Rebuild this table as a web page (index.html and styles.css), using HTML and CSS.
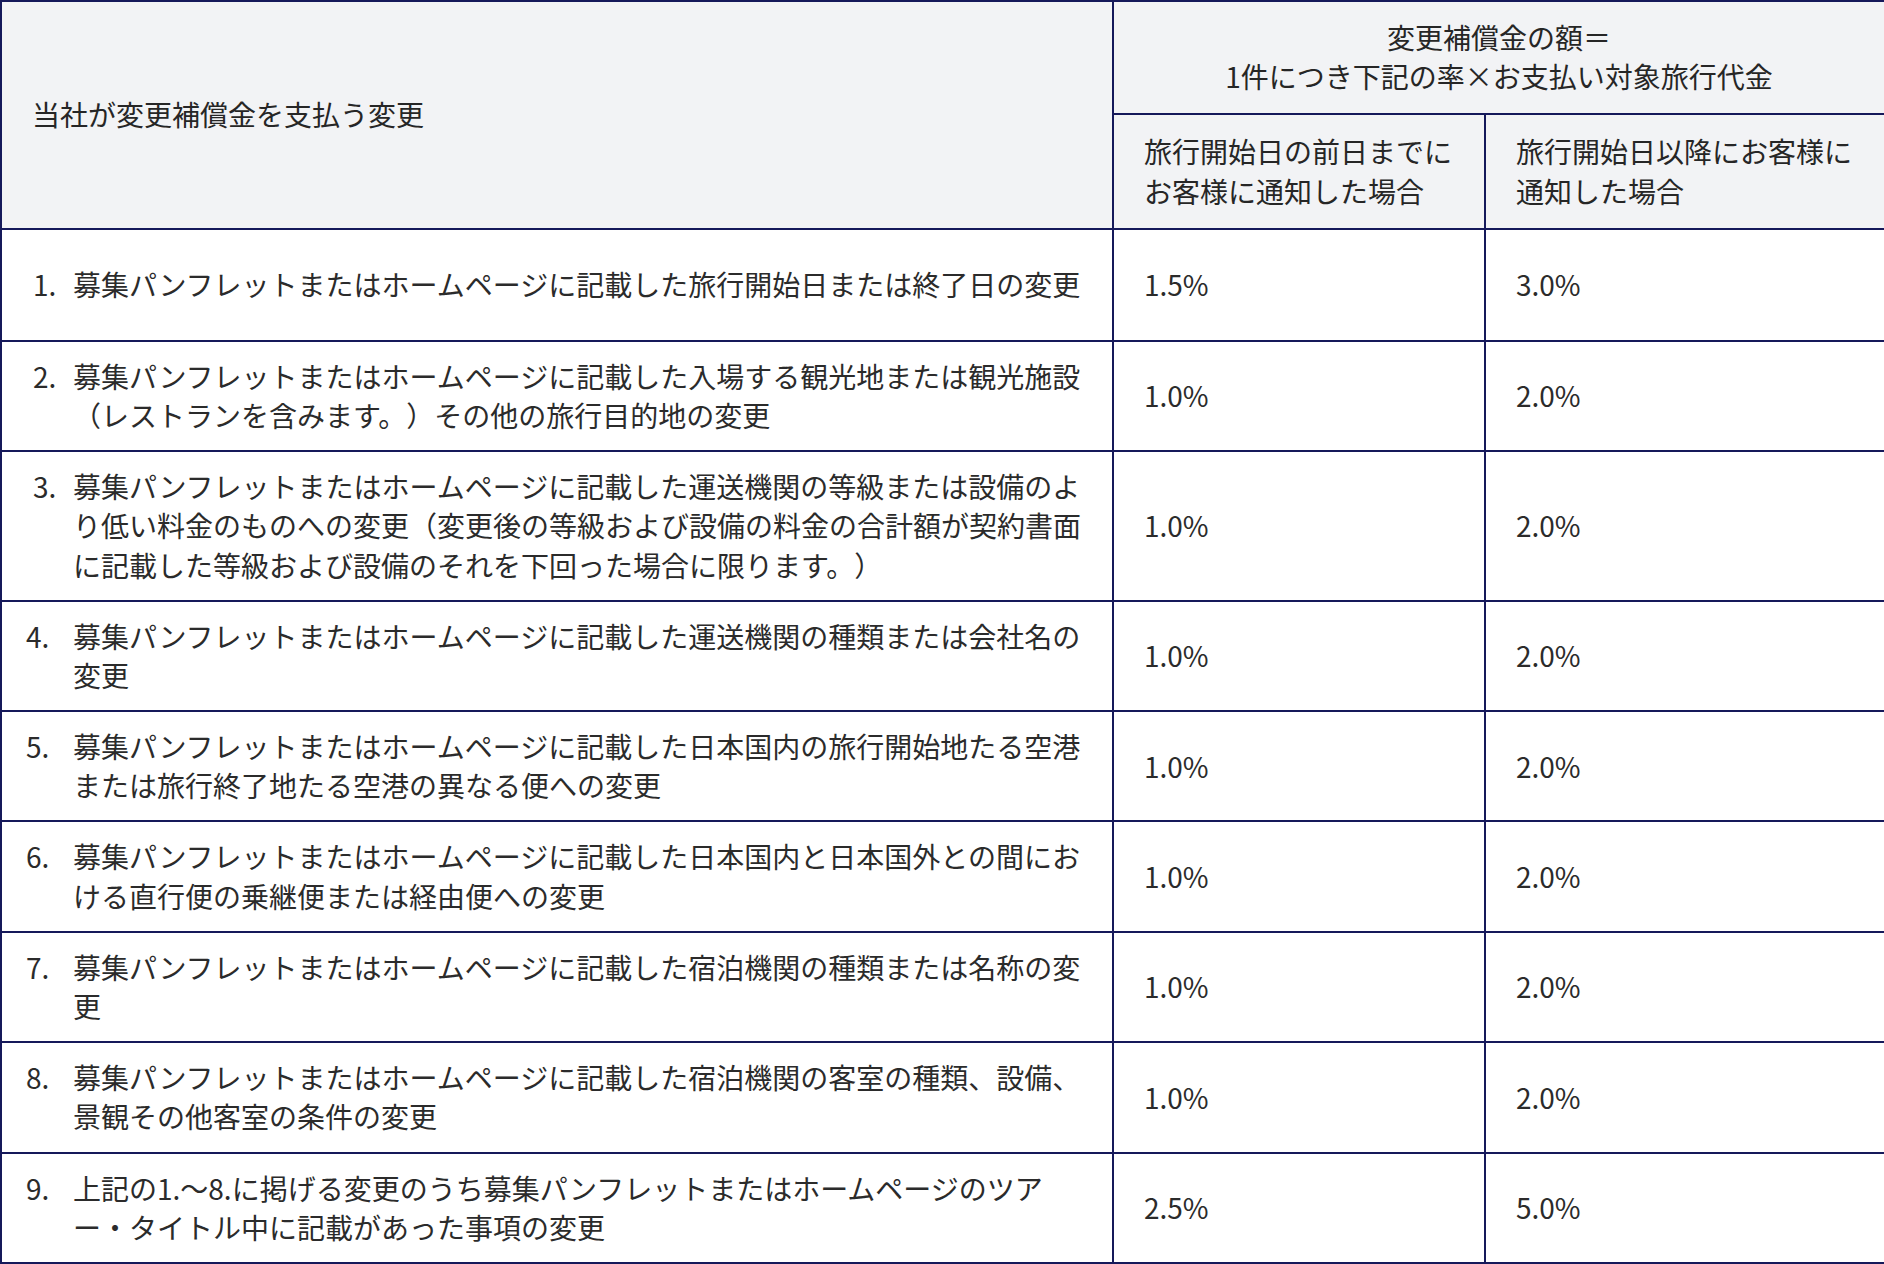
FILE: index.html
```html
<!DOCTYPE html>
<html lang="ja">
<head>
<meta charset="utf-8">
<title>変更補償金</title>
<link rel="stylesheet" href="styles.css">
</head>
<body>
<table class="comp">
  <colgroup>
    <col class="col-change">
    <col class="col-before">
    <col class="col-after">
  </colgroup>
  <thead>
    <tr>
      <th rowspan="2" class="h-main">当社が変更補償金を支払う変更</th>
      <th colspan="2" class="h-amount">変更補償金の額＝<br>1件につき下記の率×お支払い対象旅行代金</th>
    </tr>
    <tr>
      <th class="h-sub">旅行開始日の前日までに<br>お客様に通知した場合</th>
      <th class="h-sub">旅行開始日以降にお客様に<br>通知した場合</th>
    </tr>
  </thead>
  <tbody>
    <tr class="row-first">
      <td class="item"><div class="item-row"><span class="num num-a">1.</span><span class="txt">募集パンフレットまたはホームページに記載した旅行開始日または終了日の変更</span></div></td>
      <td class="rate">1.5%</td>
      <td class="rate">3.0%</td>
    </tr>
    <tr>
      <td class="item"><div class="item-row"><span class="num num-a">2.</span><span class="txt">募集パンフレットまたはホームページに記載した入場する観光地または観光施設（レストランを含みます。）その他の旅行目的地の変更</span></div></td>
      <td class="rate">1.0%</td>
      <td class="rate">2.0%</td>
    </tr>
    <tr>
      <td class="item"><div class="item-row"><span class="num num-a">3.</span><span class="txt">募集パンフレットまたはホームページに記載した運送機関の等級または設備のより低い料金のものへの変更（変更後の等級および設備の料金の合計額が契約書面に記載した等級および設備のそれを下回った場合に限ります。）</span></div></td>
      <td class="rate">1.0%</td>
      <td class="rate">2.0%</td>
    </tr>
    <tr>
      <td class="item"><div class="item-row"><span class="num num-b">4.</span><span class="txt">募集パンフレットまたはホームページに記載した運送機関の種類または会社名の変更</span></div></td>
      <td class="rate">1.0%</td>
      <td class="rate">2.0%</td>
    </tr>
    <tr>
      <td class="item"><div class="item-row"><span class="num num-b">5.</span><span class="txt">募集パンフレットまたはホームページに記載した日本国内の旅行開始地たる空港または旅行終了地たる空港の異なる便への変更</span></div></td>
      <td class="rate">1.0%</td>
      <td class="rate">2.0%</td>
    </tr>
    <tr>
      <td class="item"><div class="item-row"><span class="num num-b">6.</span><span class="txt">募集パンフレットまたはホームページに記載した日本国内と日本国外との間における直行便の乗継便または経由便への変更</span></div></td>
      <td class="rate">1.0%</td>
      <td class="rate">2.0%</td>
    </tr>
    <tr>
      <td class="item"><div class="item-row"><span class="num num-b">7.</span><span class="txt">募集パンフレットまたはホームページに記載した宿泊機関の種類または名称の変更</span></div></td>
      <td class="rate">1.0%</td>
      <td class="rate">2.0%</td>
    </tr>
    <tr>
      <td class="item"><div class="item-row"><span class="num num-b">8.</span><span class="txt">募集パンフレットまたはホームページに記載した宿泊機関の客室の種類、設備、景観その他客室の条件の変更</span></div></td>
      <td class="rate">1.0%</td>
      <td class="rate">2.0%</td>
    </tr>
    <tr>
      <td class="item"><div class="item-row"><span class="num num-b">9.</span><span class="txt">上記の1.～8.に掲げる変更のうち募集パンフレットまたはホームページのツアー・タイトル中に記載があった事項の変更</span></div></td>
      <td class="rate">2.5%</td>
      <td class="rate">5.0%</td>
    </tr>
  </tbody>
</table>
</body>
</html>
```

FILE: styles.css
```css
html, body {
  margin: 0;
  padding: 0;
  background: #ffffff;
}

body {
  font-family: "Noto Sans CJK JP", "Noto Sans", sans-serif;
  color: #2b2b2b;
}

.comp {
  width: 1884px;
  border-collapse: collapse;
  table-layout: fixed;
  font-size: 28px;
  line-height: 1.4;
  text-spacing-trim: space-all;
}

.col-change { width: 1112px; }
.col-before { width: 372px; }
.col-after { width: 400px; }

.comp th,
.comp td {
  border: 2px solid #15195a;
  padding: 15px 30px;
  text-align: left;
  vertical-align: middle;
}

.comp th {
  background: #f2f3f5;
  font-weight: 400;
  color: #262626;
  white-space: nowrap;
}

.comp th.h-amount {
  text-align: center;
  padding-top: 16px;
  padding-bottom: 17px;
}

.comp th.h-sub {
  padding-top: 17px;
  padding-bottom: 17px;
}

.comp td {
  height: 78px;
}

.row-first td {
  height: 80px;
}

.comp td.item {
  padding-left: 22px;
  padding-right: 26px;
}

.item-row {
  display: flex;
}

.num {
  box-sizing: border-box;
  flex: 0 0 49px;
}

.num-a {
  padding-left: 9px;
}

.num-b {
  padding-left: 2px;
}

.txt {
  flex: 1 1 auto;
  min-width: 0;
}
```
